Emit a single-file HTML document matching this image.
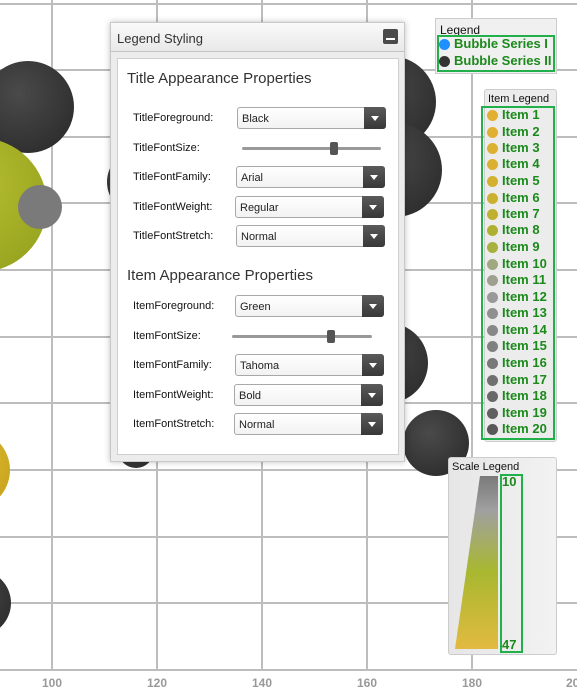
<!DOCTYPE html>
<html><head><meta charset="utf-8"><style>
*{margin:0;padding:0;box-sizing:border-box}
body{width:577px;height:694px;overflow:hidden;background:#fff;position:relative;font-family:"Liberation Sans",sans-serif}
.abs{position:absolute}
.lbl{position:absolute;font-size:11px;color:#111;left:133px}
.combo{position:absolute;height:22px;border:1px solid #a8a8a8;border-radius:3px;background:linear-gradient(#fff,#f2f2f2);font-size:11px;padding:5px 0 0 4px;color:#222}
.combo .b{position:absolute;right:-1px;top:-1px;width:22px;height:22px;background:linear-gradient(#5a5a5a,#383838);border-radius:0 3px 3px 0}
.combo .b:after{content:"";position:absolute;left:7px;top:9px;border-left:4px solid transparent;border-right:4px solid transparent;border-top:5px solid #fff}
.slider{position:absolute;height:3px;background:#999;border-radius:2px}
.thumb{position:absolute;width:8px;height:13px;background:#555;border-radius:2px}
.it{position:absolute;left:489px;font-size:13px;font-weight:bold;color:#1b8a1b;font-family:"Liberation Sans",sans-serif}
.it i{position:absolute;left:-2px;top:2px;width:11px;height:11px;border-radius:50%}
.it span{position:absolute;left:13px;white-space:nowrap;top:-1px}
.ax{position:absolute;top:676px;font-size:12px;font-weight:bold;color:#999;width:40px;text-align:center}
</style></head><body>
<svg class="abs" style="left:0;top:0" width="577" height="694">
<defs>
<radialGradient id="dk" cx="40%" cy="35%" r="70%"><stop offset="0" stop-color="#4a4a4a"/><stop offset="1" stop-color="#2e2e2e"/></radialGradient>
<radialGradient id="gr" cx="40%" cy="35%" r="70%"><stop offset="0" stop-color="#b9c030"/><stop offset="1" stop-color="#98a520"/></radialGradient>
<radialGradient id="yl" cx="40%" cy="35%" r="70%"><stop offset="0" stop-color="#e3c030"/><stop offset="1" stop-color="#c9a520"/></radialGradient>
</defs>
<g stroke="#bdbdbd" stroke-width="2">
<line x1="52" y1="0" x2="52" y2="670"/><line x1="157" y1="0" x2="157" y2="670"/><line x1="262" y1="0" x2="262" y2="670"/><line x1="367" y1="0" x2="367" y2="670"/><line x1="472" y1="0" x2="472" y2="670"/>
<line x1="0" y1="4" x2="577" y2="4"/><line x1="0" y1="70" x2="577" y2="70"/><line x1="0" y1="137" x2="577" y2="137"/><line x1="0" y1="203" x2="577" y2="203"/><line x1="0" y1="270" x2="577" y2="270"/><line x1="0" y1="337" x2="577" y2="337"/><line x1="0" y1="403" x2="577" y2="403"/><line x1="0" y1="470" x2="577" y2="470"/><line x1="0" y1="537" x2="577" y2="537"/><line x1="0" y1="603" x2="577" y2="603"/><line x1="0" y1="670" x2="577" y2="670"/>
</g>
<circle cx="28" cy="107" r="46" fill="url(#dk)"/>
<circle cx="390" cy="102" r="46" fill="url(#dk)"/>
<circle cx="395" cy="170" r="47" fill="url(#dk)"/>
<circle cx="140" cy="182" r="33" fill="url(#dk)"/>
<circle cx="388" cy="363" r="40" fill="url(#dk)"/>
<circle cx="436" cy="443" r="33" fill="url(#dk)"/>
<circle cx="136" cy="450" r="18" fill="url(#dk)"/>
<circle cx="28" cy="205" r="22" fill="url(#dk)"/>
<circle cx="-20" cy="205" r="67" fill="url(#gr)"/>
<circle cx="40" cy="207" r="22" fill="#7a7a7a"/>
<circle cx="-30" cy="470" r="40" fill="url(#yl)"/>
<circle cx="-22" cy="603" r="33" fill="url(#dk)"/>
</svg>
<div class="ax" style="left:32px">100</div><div class="ax" style="left:137px">120</div><div class="ax" style="left:242px">140</div><div class="ax" style="left:347px">160</div><div class="ax" style="left:452px">180</div><div class="ax" style="text-align:left;width:20px;left:566px">20</div>

<div class="abs" style="left:110px;top:22px;width:295px;height:440px;background:#ececec;border:1px solid #c8c8c8;box-shadow:0 0 6px rgba(0,0,0,.25)">
<div class="abs" style="left:0;top:0;width:293px;height:29px;background:linear-gradient(#fafafa,#e8e8e8);border-bottom:1px solid #c4c4c4"></div>
<div class="abs" style="left:6px;top:8px;font-size:13px;color:#333">Legend Styling</div>
<div class="abs" style="left:272px;top:6px;width:15px;height:15px;background:#4a4a4a;border-radius:2px"><div class="abs" style="left:3px;top:9px;width:9px;height:2px;background:#fff"></div></div>
<div class="abs" style="left:6px;top:35px;width:282px;height:397px;background:#fff;border:1px solid #cfcfcf"></div>
</div>
<div class="abs" style="left:127px;top:70px;font-size:15px;color:#333">Title Appearance Properties</div>
<div class="lbl" style="top:112px">TitleForeground:</div>
<div class="combo" style="left:237px;top:107px;width:149px">Black<div class="b"></div></div>
<div class="lbl" style="top:142px">TitleFontSize:</div>
<div class="slider" style="left:242px;top:147px;width:139px"></div><div class="thumb" style="left:330px;top:142px"></div>
<div class="lbl" style="top:171px">TitleFontFamily:</div>
<div class="combo" style="left:236px;top:166px;width:149px">Arial<div class="b"></div></div>
<div class="lbl" style="top:201px">TitleFontWeight:</div>
<div class="combo" style="left:235px;top:196px;width:149px">Regular<div class="b"></div></div>
<div class="lbl" style="top:230px">TitleFontStretch:</div>
<div class="combo" style="left:236px;top:225px;width:149px">Normal<div class="b"></div></div>
<div class="abs" style="left:127px;top:267px;font-size:15px;color:#333">Item Appearance Properties</div>
<div class="lbl" style="top:300px">ItemForeground:</div>
<div class="combo" style="left:235px;top:295px;width:149px">Green<div class="b"></div></div>
<div class="lbl" style="top:330px">ItemFontSize:</div>
<div class="slider" style="left:232px;top:335px;width:140px"></div><div class="thumb" style="left:327px;top:330px"></div>
<div class="lbl" style="top:359px">ItemFontFamily:</div>
<div class="combo" style="left:235px;top:354px;width:149px">Tahoma<div class="b"></div></div>
<div class="lbl" style="top:389px">ItemFontWeight:</div>
<div class="combo" style="left:234px;top:384px;width:149px">Bold<div class="b"></div></div>
<div class="lbl" style="top:418px">ItemFontStretch:</div>
<div class="combo" style="left:234px;top:413px;width:149px">Normal<div class="b"></div></div>

<div class="abs" style="left:435px;top:18px;width:122px;height:56px;background:#f0f0f0;border:1px solid #ccc"></div>
<div class="abs" style="left:440px;top:23px;font-size:12px;color:#111">Legend</div>
<div class="abs" style="left:437px;top:35px;width:118px;height:37px;border:2px solid #22b04a"></div>
<div class="it" style="top:37px;left:441px"><i style="background:#1e90ff"></i><span>Bubble Series I</span></div>
<div class="it" style="top:54px;left:441px"><i style="background:#333"></i><span>Bubble Series II</span></div>

<div class="abs" style="left:484px;top:89px;width:73px;height:353px;background:#ececec;border:1px solid #ccc;border-radius:3px"></div>
<div class="abs" style="left:488px;top:93px;font-size:11px;color:#111">Item Legend</div>
<div class="abs" style="left:481px;top:106px;width:74px;height:334px;border:2px solid #22b04a"></div>
<div class="it" style="top:108px"><i style="background:#e2b030"></i><span>Item 1</span></div>
<div class="it" style="top:124.5px"><i style="background:#e0b030"></i><span>Item 2</span></div>
<div class="it" style="top:141px"><i style="background:#dcb030"></i><span>Item 3</span></div>
<div class="it" style="top:157px"><i style="background:#dab030"></i><span>Item 4</span></div>
<div class="it" style="top:174px"><i style="background:#d4b030"></i><span>Item 5</span></div>
<div class="it" style="top:190.5px"><i style="background:#ccb030"></i><span>Item 6</span></div>
<div class="it" style="top:207px"><i style="background:#c0b030"></i><span>Item 7</span></div>
<div class="it" style="top:223px"><i style="background:#b0b030"></i><span>Item 8</span></div>
<div class="it" style="top:240px"><i style="background:#a8b040"></i><span>Item 9</span></div>
<div class="it" style="top:257px"><i style="background:#a0a880"></i><span>Item 10</span></div>
<div class="it" style="top:273px"><i style="background:#a0a090"></i><span>Item 11</span></div>
<div class="it" style="top:290px"><i style="background:#999"></i><span>Item 12</span></div>
<div class="it" style="top:306px"><i style="background:#909090"></i><span>Item 13</span></div>
<div class="it" style="top:323px"><i style="background:#888"></i><span>Item 14</span></div>
<div class="it" style="top:339px"><i style="background:#808080"></i><span>Item 15</span></div>
<div class="it" style="top:356px"><i style="background:#787878"></i><span>Item 16</span></div>
<div class="it" style="top:373px"><i style="background:#707070"></i><span>Item 17</span></div>
<div class="it" style="top:389px"><i style="background:#686868"></i><span>Item 18</span></div>
<div class="it" style="top:406px"><i style="background:#606060"></i><span>Item 19</span></div>
<div class="it" style="top:422px"><i style="background:#585858"></i><span>Item 20</span></div>

<div class="abs" style="left:448px;top:457px;width:109px;height:198px;background:linear-gradient(90deg,#e6e6e6,#f2f2f2);border:1px solid #ccc;border-radius:3px"></div>
<div class="abs" style="left:452px;top:461px;font-size:11px;color:#111">Scale Legend</div>
<svg class="abs" style="left:0;top:0" width="577" height="694">
<defs><linearGradient id="sc" x1="0" y1="0" x2="0" y2="1"><stop offset="0" stop-color="#7a7a7a"/><stop offset=".2" stop-color="#a0a0a0"/><stop offset=".55" stop-color="#a8b830"/><stop offset="1" stop-color="#e2ba40"/></linearGradient></defs>
<polygon points="480,476 498,476 498,649 455,649" fill="url(#sc)"/>
<rect x="501" y="475" width="21" height="177" fill="none" stroke="#22b04a" stroke-width="2"/>
</svg>
<div class="it" style="left:489px;top:475px"><span>10</span></div>
<div class="it" style="left:489px;top:638px"><span>47</span></div>
</body></html>
